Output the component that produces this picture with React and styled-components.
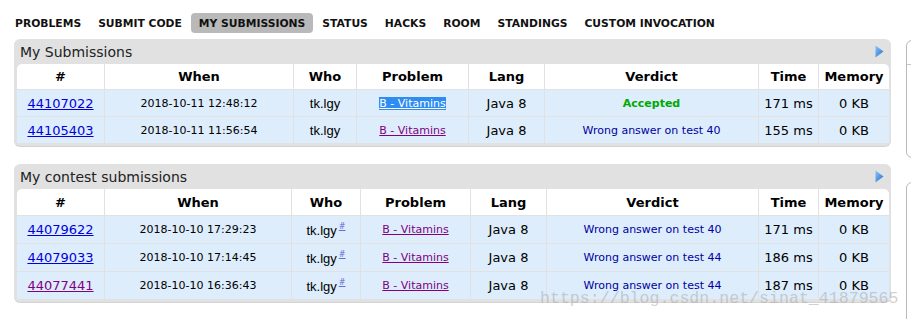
import React from 'react'
import styled, { createGlobalStyle } from 'styled-components'

const GlobalStyle = createGlobalStyle`
    body{
        margin: 0;
        background: #fff;
        font-family: "DejaVu Sans", Verdana, sans-serif;
        color: #000;
    }
`

const navItems = ['PROBLEMS', 'SUBMIT CODE', 'MY SUBMISSIONS', 'STATUS', 'HACKS', 'ROOM', 'STANDINGS', 'CUSTOM INVOCATION']

const mySubs = [
    { id: '44107022', when: '2018-10-11 12:48:12', ok: true, verdict: 'Accepted', time: '171 ms', selected: true },
    { id: '44105403', when: '2018-10-11 11:56:54', verdict: 'Wrong answer on test 40', time: '155 ms' },
]

const contestSubs = [
    { id: '44079622', when: '2018-10-10 17:29:23', verdict: 'Wrong answer on test 40', time: '171 ms' },
    { id: '44079033', when: '2018-10-10 17:14:45', verdict: 'Wrong answer on test 44', time: '186 ms' },
    { id: '44077441', when: '2018-10-10 16:36:43', verdict: 'Wrong answer on test 44', time: '187 ms', visited: true },
]

const colsA = [88, 189, 63, 112, 76, 214, 60, 70]
const colsB = [88, 187, 69, 110, 76, 212, 60, 70]
const heads = ['#', 'When', 'Who', 'Problem', 'Lang', 'Verdict', 'Time', 'Memory']

function Arrow() {
    return (
        <svg width="9" height="13" viewBox="0 0 9 13">
            <defs>
                <linearGradient id="arr" x1="0" y1="0" x2="1" y2="1">
                    <stop offset="0" stopColor="#8cc4f7" />
                    <stop offset="1" stopColor="#1e6fd2" />
                </linearGradient>
            </defs>
            <polygon points="0.5,0.5 8.5,6.5 0.5,12.5" fill="url(#arr)" />
        </svg>
    )
}

function SubmissionTable({ title, cols, rows, contest }) {
    const rowH = contest ? 28 : 27

    return (
        <Panel>
            <Caption>
                <span>{title}</span>
                <Arrow />
            </Caption>
            <Table>
                <colgroup>
                    {cols.map((w, i) => <Col key={i} $w={w} />)}
                </colgroup>
                <thead>
                    <tr>
                        {heads.map(h => <Th key={h} $h={contest ? 27 : 26}>{h}</Th>)}
                    </tr>
                </thead>
                <tbody>
                    {rows.map(r => (
                        <tr key={r.id}>
                            <Td $h={rowH}><IdLink $visited={r.visited}>{r.id}</IdLink></Td>
                            <Td $h={rowH} $small>{r.when}</Td>
                            <Td $h={rowH}>
                                <Handle>tk.lgy</Handle>
                                {contest && <Sup>#</Sup>}
                            </Td>
                            <Td $h={rowH} $small>
                                <ProblemLink $selected={r.selected}>B - Vitamins</ProblemLink>
                            </Td>
                            <Td $h={rowH}>Java 8</Td>
                            <Td $h={rowH} $small>
                                <Verdict $ok={r.ok}>{r.verdict}</Verdict>
                            </Td>
                            <Td $h={rowH}>{r.time}</Td>
                            <Td $h={rowH}>0 KB</Td>
                        </tr>
                    ))}
                </tbody>
            </Table>
        </Panel>
    )
}

function App() {
    return (
        <Page>
            <GlobalStyle />
            <Nav>
                {navItems.map(item => (
                    <NavItem key={item} $active={item === 'MY SUBMISSIONS'}>{item}</NavItem>
                ))}
            </Nav>
            <Content>
                <Main>
                    <SubmissionTable title="My Submissions" cols={colsA} rows={mySubs} />
                    <SubmissionTable title="My contest submissions" cols={colsB} rows={contestSubs} contest />
                </Main>
                <Sidebar>
                    <SideBox $h={118}><SideHead /></SideBox>
                    <SideBox $h={160} />
                </Sidebar>
            </Content>
            <Watermark>https://blog.csdn.net/sinat_41879565</Watermark>
        </Page>
    )
}

const Page = styled.div`
    position: relative;
    width: 911px;
    height: 319px;
    overflow: hidden;
    padding: 13px 0 0 7px;
    box-sizing: border-box;
`

const Nav = styled.div`
    display: flex;
    gap: 1px;
    height: 20px;
`

const NavItem = styled.div`
    display: flex;
    align-items: center;
    padding: 0 8px;
    height: 20px;
    border-radius: 4px;
    font-size: 10.75px;
    font-weight: bold;
    color: #111;
    background: ${p => p.$active ? '#b9b9b9' : 'transparent'};
    white-space: nowrap;
`

const Content = styled.div`
    display: flex;
    gap: 15px;
    margin: 6px 0 0 7px;
`

const Main = styled.div`
    width: 877px;
    flex-shrink: 0;
    display: flex;
    flex-direction: column;
    gap: 18px;
`

const Panel = styled.div`
    background: #e1e1e1;
    border-radius: 6px;
    padding: 0 2px 3px 3px;
    box-shadow: 0 1px 0 #d4d4d4;
`

const Caption = styled.div`
    height: 25px;
    display: flex;
    align-items: center;
    justify-content: space-between;
    padding: 0 5px 0 3px;
    font-size: 14px;
    color: #222;

    svg{
        margin-top: -1px;
    }
`

const Table = styled.table`
    width: 872px;
    table-layout: fixed;
    border-collapse: separate;
    border-spacing: 0;

    thead th:first-child{
        border-top-left-radius: 5px;
    }
    thead th:last-child{
        border-top-right-radius: 5px;
        border-right: none;
    }
    td:last-child{
        border-right: none;
    }
    tbody tr:last-child td{
        border-bottom: none;
    }
`

const Col = styled.col`
    width: ${p => p.$w}px;
`

const Th = styled.th`
    height: ${p => p.$h - 1}px;
    padding: 0;
    background: #fff;
    font-size: 13px;
    font-weight: bold;
    text-align: center;
    border-right: 1px solid #e1e1e1;
    border-bottom: 1px solid #e1e1e1;
`

const Td = styled.td`
    height: ${p => p.$h - 1}px;
    padding: 0;
    background: #ddedfc;
    font-size: ${p => p.$small ? '11px' : '13px'};
    text-align: center;
    white-space: nowrap;
    border-right: 1px solid #e1e1e1;
    border-bottom: 1px solid #e1e1e1;
`

const IdLink = styled.a`
    color: ${p => p.$visited ? '#800080' : '#0000dd'};
    text-decoration: underline;
    cursor: pointer;
`

const Handle = styled.span`
    font-family: "Liberation Sans", Arial, sans-serif;
    font-size: 13px;
`

const Sup = styled.sup`
    font-size: 8px;
    color: #6a6ad8;
    text-decoration: underline;
    margin-left: 2px;
    vertical-align: 6px;
`

const ProblemLink = styled.a`
    color: ${p => p.$selected ? '#fff' : '#800080'};
    background: ${p => p.$selected ? '#2f8cf0' : 'transparent'};
    text-decoration: underline;
    cursor: pointer;
`

const Verdict = styled.span`
    color: ${p => p.$ok ? '#00a900' : '#0000a0'};
    font-weight: ${p => p.$ok ? 'bold' : 'normal'};
`

const Sidebar = styled.div`
    width: 220px;
    flex-shrink: 0;
    display: flex;
    flex-direction: column;
    gap: 24px;
    padding-top: 1px;
`

const SideBox = styled.div`
    height: ${p => p.$h}px;
    border: 1px solid #b9b9b9;
    border-radius: 6px 6px 0 6px;
    box-sizing: border-box;
`

const SideHead = styled.div`
    height: 23px;
    border-bottom: 1px solid #c8c8c8;
`

const Watermark = styled.div`
    position: absolute;
    left: 540px;
    top: 289px;
    font-family: "Liberation Mono", "Courier New", monospace;
    font-size: 16.6px;
    color: rgba(170, 170, 170, 0.55);
    pointer-events: none;
    white-space: nowrap;
`

export default App
